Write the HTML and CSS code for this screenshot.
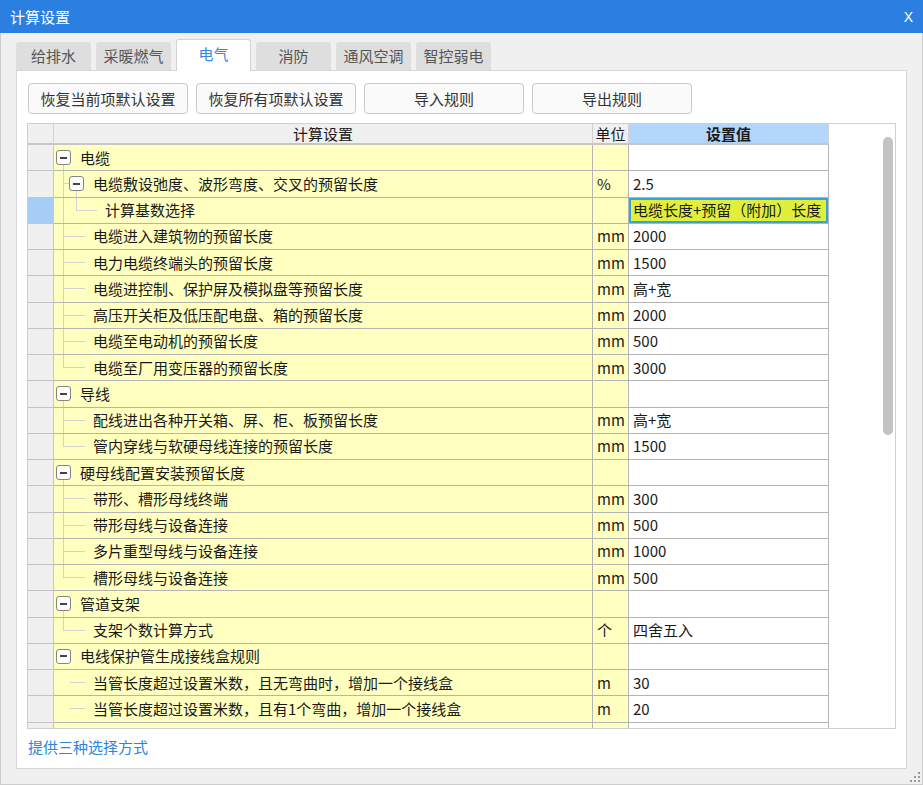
FILE: index.html
```html
<!DOCTYPE html>
<html lang="zh-CN">
<head>
<meta charset="utf-8">
<title>计算设置</title>
<link rel="stylesheet" href="styles.css">
</head>
<body>
<div class="window">
  <div class="titlebar">
    <span class="title">计算设置</span>
    <span class="close">X</span>
  </div>
  <div class="main">
    <div class="tabs">
      <div class="tab">给排水</div>
      <div class="tab">采暖燃气</div>
      <div class="tab active">电气</div>
      <div class="tab">消防</div>
      <div class="tab">通风空调</div>
      <div class="tab">智控弱电</div>
    </div>
    <div class="panel">
      <div class="actions">
        <button class="btn">恢复当前项默认设置</button>
        <button class="btn">恢复所有项默认设置</button>
        <button class="btn">导入规则</button>
        <button class="btn">导出规则</button>
      </div>
      <div class="tablebox">
        <div class="grid">
          <div class="hc hrh"></div><div class="hc">计算设置</div><div class="hc">单位</div><div class="hc hv">设置值</div>

          <div class="rh"></div>
          <div class="nm"><span class="node dn"><i class="box"></i></span><span class="tx">电缆</span></div>
          <div class="un"></div><div class="vl"></div>

          <div class="rh"></div>
          <div class="nm"><span class="g g-tee-s"></span><span class="node dn"><i class="box"></i></span><span class="tx">电缆敷设弛度、波形弯度、交叉的预留长度</span></div>
          <div class="un">%</div><div class="vl">2.5</div>

          <div class="rh sel"></div>
          <div class="nm"><span class="g g-pipe"></span><span class="g g-elbow"></span><span class="tx tl">计算基数选择</span></div>
          <div class="un"></div><div class="vl vsel">电缆长度+预留（附加）长度</div>

          <div class="rh"></div>
          <div class="nm"><span class="g g-tee"></span><span class="tx tl">电缆进入建筑物的预留长度</span></div>
          <div class="un">mm</div><div class="vl">2000</div>

          <div class="rh"></div>
          <div class="nm"><span class="g g-tee"></span><span class="tx tl">电力电缆终端头的预留长度</span></div>
          <div class="un">mm</div><div class="vl">1500</div>

          <div class="rh"></div>
          <div class="nm"><span class="g g-tee"></span><span class="tx tl">电缆进控制、保护屏及模拟盘等预留长度</span></div>
          <div class="un">mm</div><div class="vl">高+宽</div>

          <div class="rh"></div>
          <div class="nm"><span class="g g-tee"></span><span class="tx tl">高压开关柜及低压配电盘、箱的预留长度</span></div>
          <div class="un">mm</div><div class="vl">2000</div>

          <div class="rh"></div>
          <div class="nm"><span class="g g-tee"></span><span class="tx tl">电缆至电动机的预留长度</span></div>
          <div class="un">mm</div><div class="vl">500</div>

          <div class="rh"></div>
          <div class="nm"><span class="g g-elbow"></span><span class="tx tl">电缆至厂用变压器的预留长度</span></div>
          <div class="un">mm</div><div class="vl">3000</div>

          <div class="rh"></div>
          <div class="nm"><span class="node dn"><i class="box"></i></span><span class="tx">导线</span></div>
          <div class="un"></div><div class="vl"></div>

          <div class="rh"></div>
          <div class="nm"><span class="g g-tee"></span><span class="tx tl">配线进出各种开关箱、屏、柜、板预留长度</span></div>
          <div class="un">mm</div><div class="vl">高+宽</div>

          <div class="rh"></div>
          <div class="nm"><span class="g g-elbow"></span><span class="tx tl">管内穿线与软硬母线连接的预留长度</span></div>
          <div class="un">mm</div><div class="vl">1500</div>

          <div class="rh"></div>
          <div class="nm"><span class="node dn"><i class="box"></i></span><span class="tx">硬母线配置安装预留长度</span></div>
          <div class="un"></div><div class="vl"></div>

          <div class="rh"></div>
          <div class="nm"><span class="g g-tee"></span><span class="tx tl">带形、槽形母线终端</span></div>
          <div class="un">mm</div><div class="vl">300</div>

          <div class="rh"></div>
          <div class="nm"><span class="g g-tee"></span><span class="tx tl">带形母线与设备连接</span></div>
          <div class="un">mm</div><div class="vl">500</div>

          <div class="rh"></div>
          <div class="nm"><span class="g g-tee"></span><span class="tx tl">多片重型母线与设备连接</span></div>
          <div class="un">mm</div><div class="vl">1000</div>

          <div class="rh"></div>
          <div class="nm"><span class="g g-elbow"></span><span class="tx tl">槽形母线与设备连接</span></div>
          <div class="un">mm</div><div class="vl">500</div>

          <div class="rh"></div>
          <div class="nm"><span class="node dn"><i class="box"></i></span><span class="tx">管道支架</span></div>
          <div class="un"></div><div class="vl"></div>

          <div class="rh"></div>
          <div class="nm"><span class="g g-elbow"></span><span class="tx tl">支架个数计算方式</span></div>
          <div class="un">个</div><div class="vl">四舍五入</div>

          <div class="rh"></div>
          <div class="nm"><span class="node"><i class="box"></i></span><span class="tx">电线保护管生成接线盒规则</span></div>
          <div class="un"></div><div class="vl"></div>

          <div class="rh"></div>
          <div class="nm"><span class="g g-dash"></span><span class="tx tl">当管长度超过设置米数，且无弯曲时，增加一个接线盒</span></div>
          <div class="un">m</div><div class="vl">30</div>

          <div class="rh"></div>
          <div class="nm"><span class="g g-dash"></span><span class="tx tl">当管长度超过设置米数，且有1个弯曲，增加一个接线盒</span></div>
          <div class="un">m</div><div class="vl">20</div>

          <div class="rh"></div>
          <div class="nm"></div>
          <div class="un"></div><div class="vl"></div>
        </div>
        <div class="vscroll"><div class="thumb"></div></div>
      </div>
      <a class="hint">提供三种选择方式</a>
    </div>
  </div>
  <svg class="grip" width="12" height="12" viewBox="0 0 12 12">
    <rect x="9" y="1" width="2" height="2" fill="#9a9a9a"/>
    <rect x="5" y="5" width="2" height="2" fill="#9a9a9a"/>
    <rect x="9" y="5" width="2" height="2" fill="#9a9a9a"/>
    <rect x="1" y="9" width="2" height="2" fill="#9a9a9a"/>
    <rect x="5" y="9" width="2" height="2" fill="#9a9a9a"/>
    <rect x="9" y="9" width="2" height="2" fill="#9a9a9a"/>
  </svg>
</div>
</body>
</html>
```

FILE: styles.css
```css
* { box-sizing: border-box; }
html, body { margin: 0; padding: 0; }
body {
  font-family: "Noto Sans CJK SC", "Microsoft YaHei", sans-serif;
  font-size: 15px;
  color: #1a1a1a;
  background: #f0f0f0;
}
.window {
  position: relative;
  width: 923px;
  height: 785px;
  display: flex;
  flex-direction: column;
  background: #f0f0f0;
  --ln: #d2d2d2;
}
.titlebar {
  height: 33px;
  flex: none;
  background: #2a7fe1;
  color: #fff;
  display: flex;
  align-items: center;
  justify-content: space-between;
  padding: 0 10px 0 10px;
}
.title { font-size: 15px; line-height: 20px; }
.close { font-family: "Liberation Sans", sans-serif; font-size: 14px; line-height: 16px; }

.main {
  flex: 1;
  display: flex;
  flex-direction: column;
  border: 1px solid #cdcdcd;
  border-top: none;
  padding: 0 15px 15px 15px;
}
.tabs {
  display: flex;
  align-items: flex-end;
  gap: 5px;
  height: 32px;
  margin-top: 6px;
  margin-bottom: -1px;
  position: relative;
  z-index: 1;
  flex: none;
}
.tab {
  width: 75px;
  height: 28px;
  margin-bottom: 1px;
  background: #dedede;
  border-radius: 3px 3px 0 0;
  color: #555;
  font-size: 15px;
  line-height: 20px;
  display: flex;
  align-items: center;
  justify-content: center;
  padding-bottom: 1px;
}
.tab.active {
  height: 32px;
  margin-bottom: 0;
  background: #fff;
  border: 1px solid #d3d3d3;
  border-bottom: none;
  color: #2f87e6;
  padding-bottom: 3px;
}
.panel {
  flex: 1;
  background: #fff;
  border: 1px solid #d6d6d6;
  display: flex;
  flex-direction: column;
  padding: 12px 10px 0 10px;
}
.actions {
  display: flex;
  gap: 8px;
  margin-left: 1px;
  flex: none;
}
.btn {
  width: 160px;
  height: 31px;
  border: 1px solid #c9c9c9;
  border-radius: 4px;
  background: #fafafa;
  font-family: "Noto Sans CJK SC", sans-serif;
  font-size: 15px;
  line-height: 20px;
  color: #333;
  padding: 0;
}
.tablebox {
  margin-top: 9px;
  height: 606px;
  flex: none;
  border: 1px solid #cfcfcf;
  display: flex;
  overflow: hidden;
}
.grid {
  flex: none;
  align-self: flex-start;
  display: grid;
  grid-template-columns: 26px 539px 36px 200px;
  grid-template-rows: 21px;
  grid-auto-rows: 26.25px;
  line-height: 20px;
}
.hc {
  background: #f0f0f0;
  border-right: 1px solid #d2d2d2;
  border-bottom: 2px solid #c6c6c6;
  display: flex;
  align-items: center;
  justify-content: center;
  color: #1a1a1a;
}
.hc.hv { background: #b3d6fb; font-weight: bold; }
.rh {
  background: #f0f0f0;
  border-right: 1px solid #c9c9c9;
  border-bottom: 1px solid #c4c4c4;
}
.rh.sel { background: #a6cdf5; }
.nm, .un, .vl {
  border-right: 1px solid #b4b4b4;
  border-bottom: 1px solid #b4b4b4;
}
.nm {
  background: #ffffc0;
  display: flex;
  align-items: stretch;
}
.un {
  background: #ffffc0;
  padding-left: 4px;
  display: flex;
  align-items: center;
}
.vl {
  background: #fff;
  padding-left: 4px;
  display: flex;
  align-items: center;
}
.vl.vsel {
  background: #e0ef3c;
  box-shadow: inset 0 0 0 2px #37a3d8;
  white-space: nowrap;
}
.tx {
  align-self: center;
  white-space: nowrap;
  margin-left: 9px;
}
.tx.tl { margin-left: 8px; }

.node {
  flex: none;
  width: 15px;
  margin-left: 2px;
  display: flex;
  align-items: center;
}
.g-tee-s + .node { margin-left: 0; }
.node.dn {
  background: linear-gradient(var(--ln), var(--ln)) 7px 100% / 1px 50% no-repeat;
}
.box {
  width: 15px;
  height: 15px;
  border: 1px solid #858585;
  border-radius: 3px;
  background: #fff;
  display: flex;
  align-items: center;
  justify-content: center;
}
.box::before {
  content: "";
  width: 7px;
  height: 2px;
  background: #444;
}
.g { flex: none; }
.g-pipe {
  width: 13px;
  background: linear-gradient(var(--ln), var(--ln)) 9px 0 / 1px 100% no-repeat;
}
.g-tee {
  width: 31px;
  background:
    linear-gradient(var(--ln), var(--ln)) 9px 0 / 1px 100% no-repeat,
    linear-gradient(var(--ln), var(--ln)) 9px 50% / 22px 1px no-repeat;
}
.g-tee-s {
  width: 15px;
  background:
    linear-gradient(var(--ln), var(--ln)) 9px 0 / 1px 100% no-repeat,
    linear-gradient(var(--ln), var(--ln)) 9px 50% / 6px 1px no-repeat;
}
.g-elbow {
  width: 31px;
  background:
    linear-gradient(var(--ln), var(--ln)) 9px 0 / 1px 50% no-repeat,
    linear-gradient(var(--ln), var(--ln)) 9px 50% / 22px 1px no-repeat;
}
.g-pipe + .g-elbow { width: 30px; }
.g-dash {
  width: 31px;
  background: linear-gradient(var(--ln), var(--ln)) 16px 50% / 15px 1px no-repeat;
}
.vscroll {
  width: 14px;
  margin-left: auto;
  padding-top: 13px;
  flex: none;
}
.thumb {
  width: 10px;
  height: 298px;
  margin-left: 2px;
  border-radius: 5px;
  background: #c3c3c3;
}
.hint {
  margin-top: 8px;
  margin-left: 1px;
  line-height: 20px;
  color: #2b84e0;
  font-size: 15px;
  flex: none;
}
.grip {
  position: absolute;
  right: 2px;
  bottom: 2px;
}
```
